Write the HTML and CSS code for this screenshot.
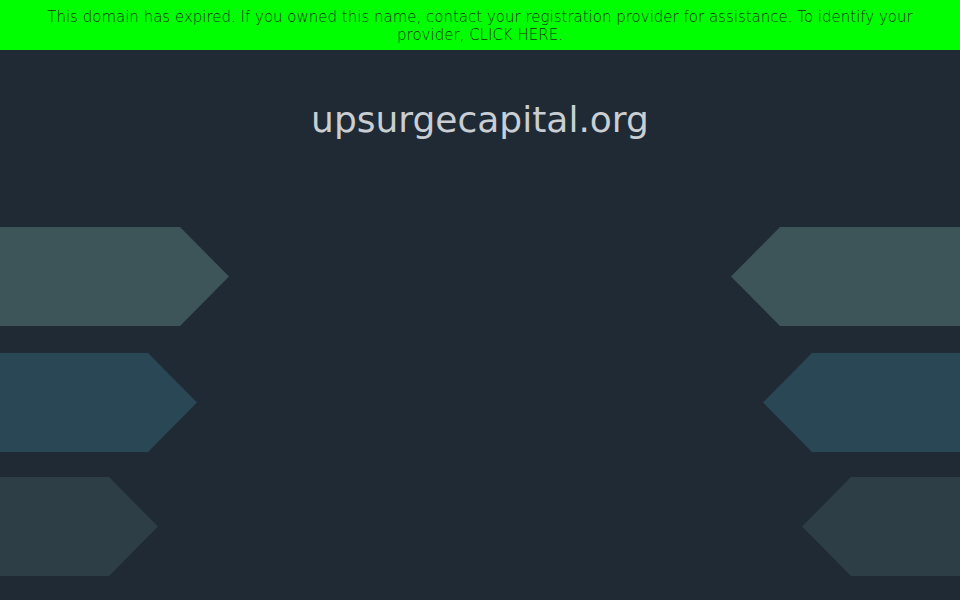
FILE: index.html
```html
<!DOCTYPE html>
<html>
<head>
<meta charset="utf-8">
<link rel="stylesheet" href="styles.css">
</head>
<body>
<div class="banner">This domain has expired. If you owned this name, contact your registration provider for assistance. To identify your provider, <a class="banner-link" href="#">CLICK HERE</a>.</div>
<h1 class="title">upsurgecapital.org</h1>
<div class="arrows">
  <div class="col col-left">
    <div class="arrow arrow-right a1 w1"></div>
    <div class="arrow arrow-right a2 w2"></div>
    <div class="arrow arrow-right a3 w3"></div>
  </div>
  <div class="col col-right">
    <div class="arrow arrow-left a1 w1"></div>
    <div class="arrow arrow-left a2 w2"></div>
    <div class="arrow arrow-left a3 w3"></div>
  </div>
</div>
</body>
</html>
```
FILE: styles.css
```css
html, body {
  margin: 0;
  padding: 0;
}
body {
  background: #1f2a35;
  font-family: "DejaVu Sans", sans-serif;
  height: 600px;
  overflow: hidden;
}
.banner {
  background: #00ff00;
  height: 50px;
  box-sizing: border-box;
  padding: 8px 40px 0;
  text-align: center;
  font-size: 15px;
  font-weight: 200;
  line-height: 18px;
  color: #1a2e1a;
}
.banner-link {
  color: inherit;
  text-decoration: none;
}
.title {
  margin: 48px 0 0;
  font-size: 36px;
  line-height: 44px;
  font-weight: normal;
  text-align: center;
  color: #c9ced3;
}
.arrows {
  margin-top: 85px;
  display: flex;
  justify-content: space-between;
}
.col {
  display: flex;
  flex-direction: column;
}
.col-left { align-items: flex-start; }
.col-right { align-items: flex-end; }
.arrow {
  height: 99px;
}
.arrow + .arrow { margin-top: 27px; }
.a3 { margin-top: 25px !important; }
.w1 { width: 229px; }
.w2 { width: 197px; }
.w3 { width: 158px; }
.a1 { background: #3d5558; }
.a2 { background: #2a4756; }
.a3 { background: #2d3e47; }
.arrow-right {
  clip-path: polygon(0 0, calc(100% - 49px) 0, 100% 50%, calc(100% - 49px) 100%, 0 100%);
}
.arrow-left {
  clip-path: polygon(49px 0, 100% 0, 100% 100%, 49px 100%, 0 50%);
}
```
